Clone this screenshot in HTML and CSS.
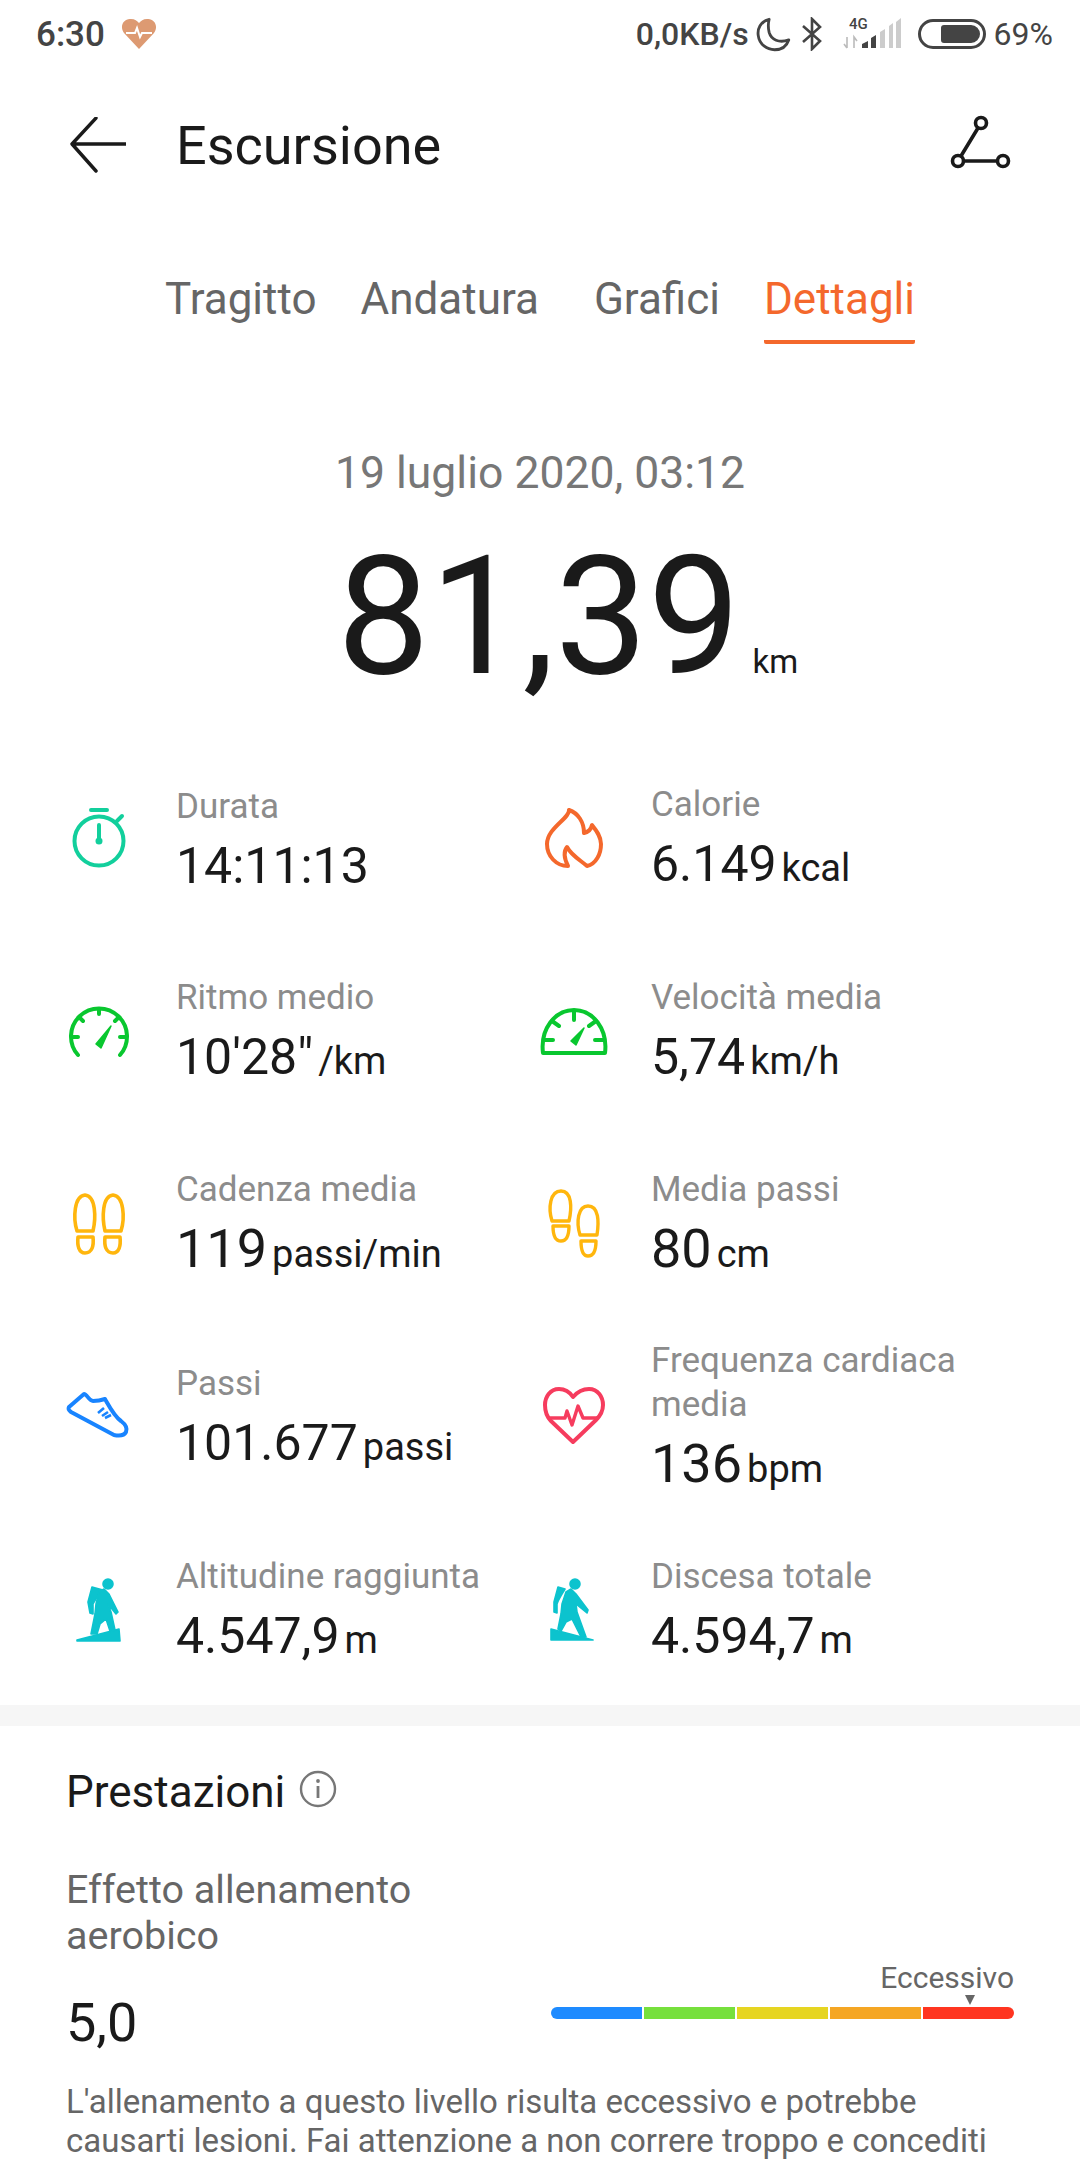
FILE: index.html
```html
<!DOCTYPE html>
<html lang="it">
<head>
    <meta charset="UTF-8">
    <meta name="viewport" content="width=device-width, initial-scale=1.0">
    <title>Escursione</title>
    <link rel="stylesheet" href="styles.css">
</head>
<body>

    <div class="status-bar">
        <span class="status-time">6:30</span>
        <svg class="status-heart" width="36" height="34" viewBox="0 0 36 34">
            <path d="M18 32 L3 16 C-2 9 3 1 10 2 C14 2 16 4 18 6 C20 4 22 2 26 2 C33 1 38 9 33 16 Z" fill="#dd9a72"/>
            <path d="M5 16 H14 L16 11 L19 20 L21 16 H31" fill="none" stroke="#fff" stroke-width="2"/>
        </svg>
        <span class="status-spacer"></span>
        <span class="status-speed">0,0KB/s</span>
        <svg class="status-moon" width="37" height="37" viewBox="0 0 34 34">
            <path d="M13 3 C5 5 2 12 3 18 C4 26 11 31 18 31 C24 31 29 28 31 22 C22 25 15 22 13 15 C12 11 12 7 13 3 Z" fill="none" stroke="#444" stroke-width="2.6" stroke-linejoin="round"/>
        </svg>
        <svg class="status-bt" width="22" height="34" viewBox="0 0 22 34">
            <path d="M2 9 L19 24 L11 32 V2 L19 10 L2 25" fill="none" stroke="#444" stroke-width="2.6"/>
        </svg>
        <svg class="status-signal" width="60" height="42" viewBox="0 -4 60 42">
            <text x="6" y="12" class="signal-label">4G</text>
            <path d="M4 20 V31 M1 27 L4 31 M11 31 V20 L14 24" fill="none" stroke="#bbb" stroke-width="1.6"/>
            <path d="M19 31 V27 L25 24 V31 Z M28 31 V21 L33 18 V31 Z" fill="#444"/>
            <path d="M37 31 V15 L42 12 V31 Z M46 31 V9 L50 6 V31 Z M53 31 V5 L58 1 V31 Z" fill="#ccc"/>
        </svg>
        <div class="status-battery"><div class="status-battery-fill"></div></div>
        <span class="status-percent">69%</span>
    </div>

    <div class="toolbar">
        <svg class="toolbar-back" width="56" height="56" viewBox="0 0 56 56">
            <path d="M26 1 L2 27 L26 54 M3 27 H56" fill="none" stroke="#1a1a1a" stroke-width="3.4" stroke-linecap="round" stroke-linejoin="round"/>
        </svg>
        <span class="toolbar-title">Escursione</span>
        <svg class="toolbar-route" width="62" height="56" viewBox="0 0 62 56">
            <circle cx="32" cy="8" r="5.5" fill="none" stroke="#1a1a1a" stroke-width="3.6"/>
            <circle cx="9" cy="46" r="5.5" fill="none" stroke="#1a1a1a" stroke-width="3.6"/>
            <circle cx="54" cy="46" r="5.5" fill="none" stroke="#1a1a1a" stroke-width="3.6"/>
            <path d="M29 13 L12 41 M15 46 H48" fill="none" stroke="#1a1a1a" stroke-width="3.6"/>
        </svg>
    </div>

    <div class="tabs">
        <span class="tab">Tragitto</span>
        <span class="tab tab-wide">Andatura</span>
        <span class="tab">Grafici</span>
        <span class="tab tab-active">Dettagli</span>
    </div>

    <div class="summary">
        <div class="summary-date">19 luglio 2020, 03:12</div>
        <div class="summary-distance"><span class="summary-value">81,39</span><span class="summary-unit">km</span></div>
    </div>

    <div class="stats">
        <div class="stat">
            <div class="stat-icon">
                <svg width="64" height="64" viewBox="0 0 64 64">
                    <circle cx="32" cy="35" r="24.5" fill="none" stroke="#12cf9c" stroke-width="4"/>
                    <path d="M24 4 H40 M50 15 L55 10 M32 19 V35" fill="none" stroke="#12cf9c" stroke-width="4" stroke-linecap="round"/>
                    <circle cx="32" cy="35" r="3.5" fill="#12cf9c"/>
                </svg>
            </div>
            <div class="stat-text">
                <div class="stat-label">Durata</div>
                <div class="stat-value">14:11:13</div>
            </div>
        </div>
        <div class="stat">
            <div class="stat-icon">
                <svg width="64" height="64" viewBox="0 0 64 64">
                    <path d="M27 4 C28 12 5 22 5 38 C5 50 14 60 26 60 C22 52 21 46 25 41 C29 49 38 54 45 60 C54 58 59 48 59 38 C59 30 54 24 50 19 C49 24 46 26 42 27 C42 16 36 7 27 4 Z" fill="none" stroke="#f4682c" stroke-width="4" stroke-linejoin="round"/>
                </svg>
            </div>
            <div class="stat-text">
                <div class="stat-label">Calorie</div>
                <div class="stat-value">6.149<span class="stat-unit">kcal</span></div>
            </div>
        </div>
        <div class="stat">
            <div class="stat-icon">
                <svg width="64" height="64" viewBox="0 0 64 64">
                    <path d="M11 56 A28 28 0 1 1 53 56 M32 10 V15 M5 38 H11 M59 38 H53 M12 18 L16 22 M52 18 L48 22" fill="none" stroke="#09c72f" stroke-width="4" stroke-linecap="round"/>
                    <path d="M44 27 L34 49 L29 45 Z" fill="#09c72f" stroke="#09c72f" stroke-width="1.5" stroke-linejoin="round"/>
                </svg>
            </div>
            <div class="stat-text">
                <div class="stat-label">Ritmo medio</div>
                <div class="stat-value">10'28"<span class="stat-unit">/km</span></div>
            </div>
        </div>
        <div class="stat">
            <div class="stat-icon">
                <svg width="68" height="64" viewBox="0 0 68 64">
                    <path d="M3 54 C0 30 15 11 34 11 C53 11 68 30 65 54 Z" fill="none" stroke="#09c72f" stroke-width="4" stroke-linejoin="round"/>
                    <path d="M34 13 V21 M5 41 H13 M63 41 H55 M12 22 L19 27 M56 22 L49 27" fill="none" stroke="#09c72f" stroke-width="4" stroke-linecap="round"/>
                    <path d="M44 29 L36 46 L31 42 Z" fill="#09c72f" stroke="#09c72f" stroke-width="1.5" stroke-linejoin="round"/>
                </svg>
            </div>
            <div class="stat-text">
                <div class="stat-label">Velocità media</div>
                <div class="stat-value">5,74<span class="stat-unit">km/h</span></div>
            </div>
        </div>
        <div class="stat">
            <div class="stat-icon">
                <svg width="64" height="64" viewBox="0 0 64 64">
                    <g fill="none" stroke="#ffb60d" stroke-width="3.6" stroke-linejoin="round">
                        <path d="M10 39 C6 26 7 4 18 3 C29 4 29 26 26 39 Z"/>
                        <path d="M11 45 H26 C27 54 25 61 18 61 C12 61 10 54 11 45 Z"/>
                        <path d="M54 39 C58 26 57 4 46 3 C35 4 35 26 38 39 Z"/>
                        <path d="M53 45 H38 C37 54 39 61 46 61 C52 61 54 54 53 45 Z"/>
                    </g>
                </svg>
            </div>
            <div class="stat-text">
                <div class="stat-label">Cadenza media</div>
                <div class="stat-value stat-value-big">119<span class="stat-unit">passi/min</span></div>
            </div>
        </div>
        <div class="stat">
            <div class="stat-icon">
                <svg width="64" height="72" viewBox="0 0 64 72">
                    <g fill="none" stroke="#ffb60d" stroke-width="3.4" stroke-linejoin="round">
                        <path d="M10 33 C6 20 8 3 19 3 C30 3 30 20 27 33 Z"/>
                        <path d="M11 38 H27 C27 47 25 53 19 53 C13 53 11 47 11 38 Z"/>
                        <path d="M38 47 C34 34 36 18 46 18 C57 18 57 34 55 47 Z"/>
                        <path d="M39 53 H54 C54 62 52 68 46 68 C41 68 39 62 39 53 Z"/>
                    </g>
                </svg>
            </div>
            <div class="stat-text">
                <div class="stat-label">Media passi</div>
                <div class="stat-value stat-value-big">80<span class="stat-unit">cm</span></div>
            </div>
        </div>
        <div class="stat">
            <div class="stat-icon">
                <svg width="80" height="64" viewBox="0 0 80 64">
                    <path d="M10 22 L25 9 C28 9 30 16 34 16 C38 16 43 15 46 14 C50 21 55 31 62 36 C66 39 69 42 67 47 C65 51 60 51 55 50 L12 27 C9 25 9 24 10 22 Z" fill="none" stroke="#1884ff" stroke-width="4" stroke-linejoin="round"/>
                    <path d="M39 28 L45 23 M43 31 L49 27 M46 33 L52 30" fill="none" stroke="#1884ff" stroke-width="2.6"/>
                </svg>
            </div>
            <div class="stat-text">
                <div class="stat-label">Passi</div>
                <div class="stat-value">101.677<span class="stat-unit">passi</span></div>
            </div>
        </div>
        <div class="stat">
            <div class="stat-icon">
                <svg width="78" height="64" viewBox="0 0 78 64">
                    <path d="M38 12 C44 5 50 4 54 4 C63 4 68 12 68 20 C68 26 65 31 61 35 L38 57 L16 36 C12 32 10 26 10 20 C10 12 15 4 24 4 C29 4 34 6 38 12 Z" fill="none" stroke="#f63c5e" stroke-width="4" stroke-linejoin="round"/>
                    <path d="M14 33 H30 L32 26 L37 40 L43 21 L48 33 H64" fill="none" stroke="#f63c5e" stroke-width="3.4" stroke-linejoin="round"/>
                </svg>
            </div>
            <div class="stat-text">
                <div class="stat-label">Frequenza cardiaca media</div>
                <div class="stat-value stat-value-big">136<span class="stat-unit">bpm</span></div>
            </div>
        </div>
        <div class="stat">
            <div class="stat-icon">
                <svg width="60" height="75" viewBox="0 0 60 75">
                    <g fill="#0cc3ce" stroke="#0cc3ce" stroke-width="1.6" stroke-linejoin="round">
                        <circle cx="39" cy="12" r="5"/>
                        <path d="M23 15 L34 18 C30 22 26 28 24 32 L24 42 L21 41 L19 30 Z"/>
                        <path d="M30 20 L35 17 L40 22 L49 40 L47 42 L39 32 L42 40 L46 58 L41 59 L37 47 L31 52 L28 62 L22 62 L26 42 L27 32 Z"/>
                        <path d="M8 68 L50 57 L51 69 L8 69 Z"/>
                    </g>
                </svg>
            </div>
            <div class="stat-text">
                <div class="stat-label">Altitudine raggiunta</div>
                <div class="stat-value">4.547,9<span class="stat-unit">m</span></div>
            </div>
        </div>
        <div class="stat">
            <div class="stat-icon">
                <svg width="60" height="75" viewBox="0 0 60 75">
                    <g fill="#0cc3ce" stroke="#0cc3ce" stroke-width="1.6" stroke-linejoin="round">
                        <circle cx="31" cy="12" r="5"/>
                        <path d="M14 15 L21 17 C18 22 14 28 13 32 L13 41 L10 40 L10 30 Z"/>
                        <path d="M22 20 L27 17 L32 22 L44 38 L43 41 L32 32 L33 40 L42 65 L37 65 L28 47 L22 50 L17 59 L14 57 L17 42 L18 32 Z"/>
                        <path d="M7 57 L49 68 L7 68 Z"/>
                    </g>
                </svg>
            </div>
            <div class="stat-text">
                <div class="stat-label">Discesa totale</div>
                <div class="stat-value">4.594,7<span class="stat-unit">m</span></div>
            </div>
        </div>
    </div>

    <div class="divider"></div>

    <div class="perf">
        <div class="perf-head">
            <span class="perf-title">Prestazioni</span>
            <svg class="perf-info" width="38" height="38" viewBox="0 0 38 38">
                <circle cx="19" cy="19" r="17" fill="none" stroke="#777" stroke-width="2.4"/>
                <path d="M19 16 V28" stroke="#777" stroke-width="2.8"/>
                <circle cx="19" cy="11" r="1.9" fill="#777"/>
            </svg>
        </div>
        <div class="perf-effect">Effetto allenamento<br>aerobico</div>
        <div class="perf-row">
            <span class="perf-score">5,0</span>
            <div class="perf-scale">
                <div class="perf-level">Eccessivo</div>
                <div class="perf-marker"></div>
                <div class="perf-bar">
                    <div class="perf-seg seg-blue"></div>
                    <div class="perf-seg seg-green"></div>
                    <div class="perf-seg seg-yellow"></div>
                    <div class="perf-seg seg-orange"></div>
                    <div class="perf-seg seg-red"></div>
                </div>
            </div>
        </div>
        <p class="perf-note">L'allenamento a questo livello risulta eccessivo e potrebbe causarti lesioni. Fai attenzione a non correre troppo e concediti</p>
    </div>

</body>
</html>
```

FILE: styles.css
```css
html, body {
    height: 2160px;
    overflow: hidden;
}

body {
    font-family: 'Roboto', 'Liberation Sans', sans-serif;
    margin: 0;
    background: #fff;
    color: #1a1a1a;
}

/* status bar */
.status-bar {
    display: flex;
    align-items: center;
    height: 68px;
    padding: 0 27px 0 36px;
    color: #444;
}

.status-time {
    font-size: 35px;
    font-weight: 500;
}

.status-heart {
    margin-left: 16px;
}

.status-spacer {
    flex: 1;
}

.status-speed {
    font-size: 32px;
    font-weight: 500;
}

.status-moon {
    margin-left: 6px;
}

.status-bt {
    margin-left: 9px;
}

.status-signal {
    margin-left: 20px;
}

.signal-label {
    font-size: 15px;
    font-weight: 500;
    fill: #444;
}

.status-battery {
    width: 68px;
    height: 30px;
    margin-left: 15px;
    padding: 3px;
    box-sizing: border-box;
    border: 3px solid #444;
    border-radius: 15px;
    display: flex;
    justify-content: flex-end;
}

.status-battery-fill {
    width: 39px;
    background: #444;
    border-radius: 3px 9px 9px 3px;
}

.status-percent {
    font-size: 32px;
    margin-left: 8px;
}

/* toolbar */
.toolbar {
    display: flex;
    align-items: center;
    height: 84px;
    margin-top: 35px;
    padding: 0 69px 0 70px;
}

.toolbar-title {
    font-size: 54px;
    margin-left: 50px;
    flex: 1;
}

.toolbar-route {
    margin-bottom: 5px;
}

/* tabs */
.tabs {
    display: flex;
    margin-top: 79px;
    padding-left: 165px;
}

.tab {
    font-size: 44px;
    line-height: 66px;
    padding-bottom: 8px;
    margin-right: 44px;
    color: #666;
    border-bottom: 4px solid transparent;
}

.tab-wide {
    margin-right: 55px;
}

.tab-active {
    color: #f4682c;
    border-bottom-color: #f4682c;
    border-radius: 0 0 2px 2px;
    margin-right: 0;
}

/* summary */
.summary {
    margin-top: 99px;
    text-align: center;
}

.summary-date {
    font-size: 44.5px;
    line-height: 60px;
    color: #777;
}

.summary-distance {
    display: flex;
    align-items: baseline;
    padding-left: 337px;
    margin-top: 19px;
}

.summary-value {
    font-size: 165px;
    line-height: 190px;
}

.summary-unit {
    font-size: 33px;
    margin-left: 12px;
}

/* stats */
.stats {
    display: grid;
    grid-template-columns: 475px 475px;
    grid-auto-rows: 193px;
    padding-left: 44px;
    margin-top: 28px;
}

.stat {
    display: flex;
    align-items: center;
    padding-top: 10px;
    box-sizing: border-box;
}

.stat-icon {
    width: 110px;
    margin-right: 22px;
    padding-bottom: 8px;
    display: flex;
    justify-content: center;
}

.stat-label {
    font-size: 35px;
    line-height: 44px;
    color: #8c8c8c;
    width: 340px;
}

.stat-value {
    font-size: 50px;
    line-height: 66px;
    margin-top: 4px;
}

.stat-value-big {
    font-size: 54px;
}

.stat-unit {
    font-size: 38px;
    margin-left: 5px;
}

.divider {
    height: 21px;
    background: #f6f6f6;
}

/* performance */
.perf {
    padding: 0 66px;
}

.perf-head {
    display: flex;
    align-items: center;
    margin-top: 40px;
}

.perf-title {
    font-size: 44px;
}

.perf-info {
    margin-left: 14px;
    margin-bottom: 6px;
}

.perf-effect {
    font-size: 39.5px;
    line-height: 46px;
    color: #666;
    margin-top: 49px;
}

.perf-row {
    display: flex;
    justify-content: space-between;
    align-items: flex-start;
    margin-top: 2px;
}

.perf-score {
    font-size: 54px;
    line-height: 70px;
    margin-top: 27px;
}

.perf-scale {
    width: 463px;
    text-align: right;
}

.perf-level {
    font-size: 30px;
    line-height: 34px;
    color: #666;
}

.perf-marker {
    width: 0;
    height: 0;
    margin: 0 39px 2px auto;
    border-left: 5px solid transparent;
    border-right: 5px solid transparent;
    border-top: 10px solid #666;
}

.perf-bar {
    display: flex;
    gap: 2px;
    height: 12px;
    border-radius: 6px;
    overflow: hidden;
}

.perf-seg {
    flex: 1;
}

.seg-blue { background: #1e8bff; }
.seg-green { background: #76e03c; }
.seg-yellow { background: #e6d521; }
.seg-orange { background: #f5a623; }
.seg-red { background: #ff3520; }

.perf-note {
    font-size: 33px;
    line-height: 39px;
    color: #666;
    margin: 24px 0 0;
}
```
